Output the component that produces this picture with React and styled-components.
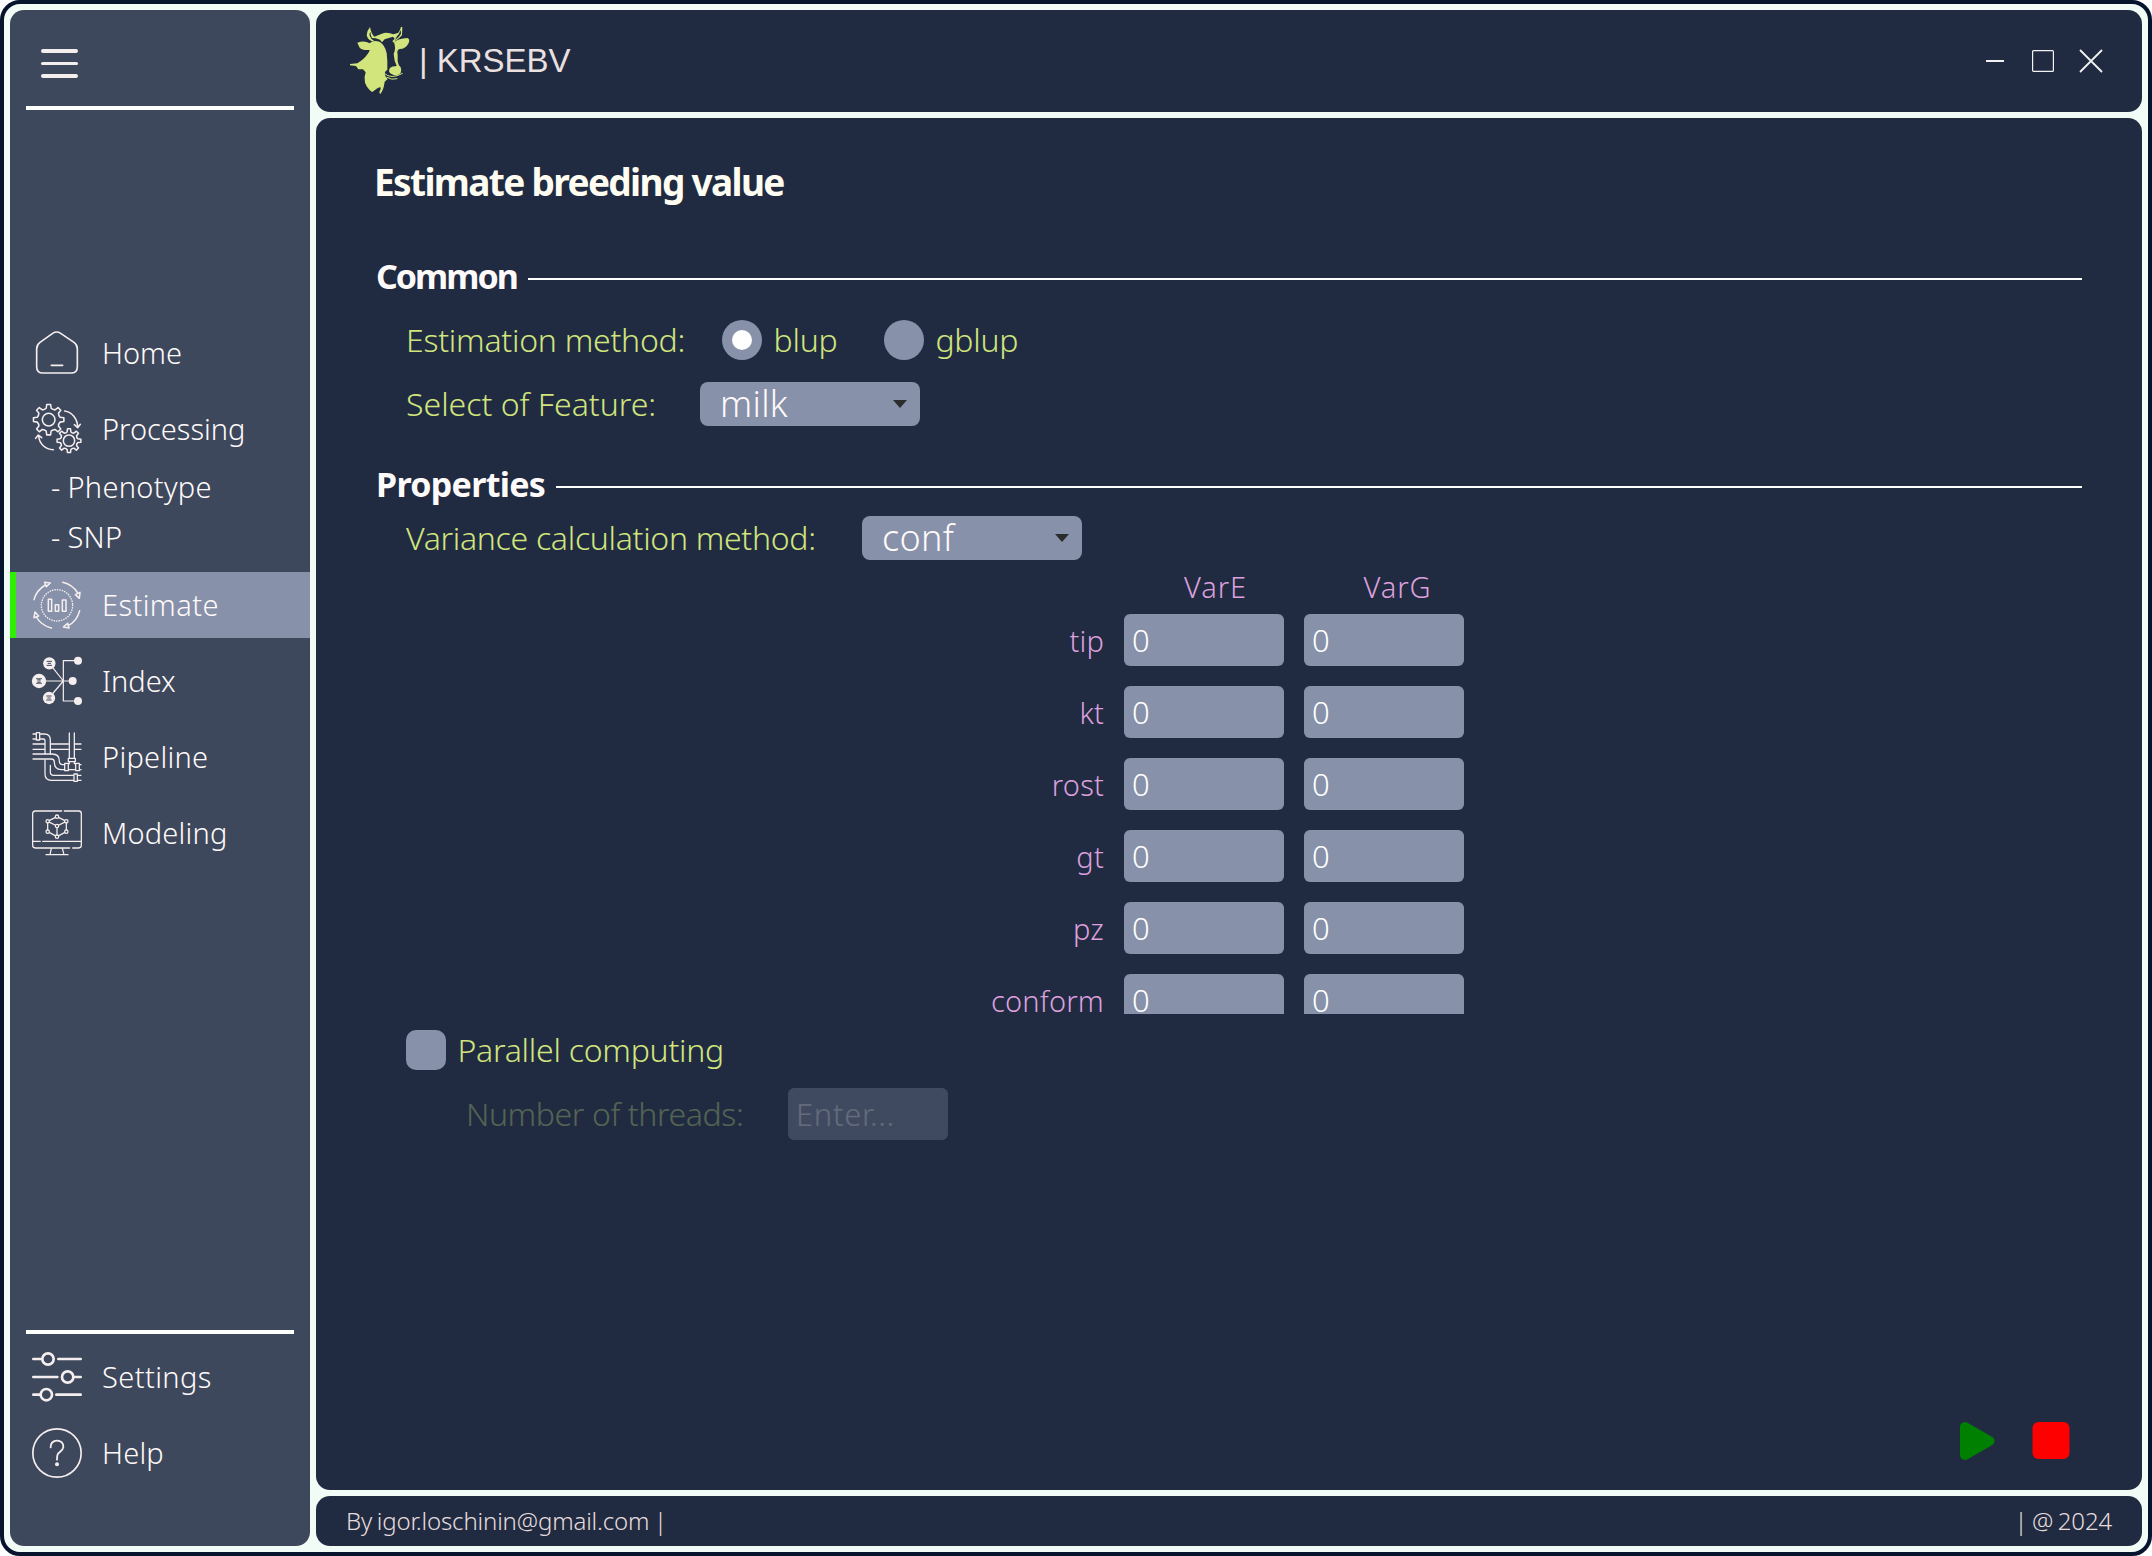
import React from "react";
import styled, { createGlobalStyle, css } from "styled-components";

const colors = {
  frame: "#07142e",
  gap: "#f2fcf7",
  sidebar: "#3e485c",
  panel: "#202b42",
  field: "#8791a9",
  icon: "#f5eeee",
  text: "#fffafa",
  lime: "#d1e57c",
  plum: "#dda0dd",
};

const GlobalStyle = createGlobalStyle`
  *, *::before, *::after { box-sizing: border-box; }
  body {
    margin: 0;
    background: #fff;
    font-family: "Noto Sans", "Open Sans", sans-serif;
    font-weight: 330;
  }
  button, input { font: inherit; }
`;

const Window = styled.div`
  display: grid;
  grid-template-columns: 300px minmax(0, 1fr);
  gap: 6px;
  width: 2152px;
  height: 1556px;
  padding: 6px;
  overflow: hidden;
  background: ${colors.gap};
  border: 4px solid ${colors.frame};
  border-radius: 20px;
`;

const panel = css`
  background: ${colors.panel};
  border-radius: 14px;
`;

const Sidebar = styled.aside`
  display: flex;
  flex-direction: column;
  padding-bottom: 60px;
  background: ${colors.sidebar};
  border-radius: 14px;
`;

const MenuToggle = styled.button`
  display: flex;
  flex-direction: column;
  gap: 9px;
  width: 37px;
  margin: 39px 0 28px 30.5px;
  padding: 0;
  border: 0;
  background: none;
`;

const ToggleBar = styled.span`
  height: 3.6px;
  border-radius: 2px;
  background: ${colors.icon};
`;

const Divider = styled.hr`
  width: 268px;
  height: 4px;
  margin: 0 16px;
  border: 0;
  background: #fff;
`;

const Nav = styled.nav`
  display: flex;
  flex-direction: column;
  gap: 10px;
  margin-top: ${(p) => p.$top};
`;

const NavItem = styled.a`
  display: flex;
  align-items: center;
  gap: 20px;
  height: 66px;
  padding: 0 16px;
  border-left: 6px solid ${(p) => (p.$active ? "#2df000" : "transparent")};
  background: ${(p) => (p.$active ? colors.field : "transparent")};
  background-clip: padding-box;
  color: ${colors.text};
  font-size: 29px;
  letter-spacing: ${(p) => p.$spacing || "0"};
  line-height: 40px;
`;

const NavGroup = styled.div`
  display: flex;
  flex-direction: column;
`;

const SubList = styled.div`
  display: flex;
  flex-direction: column;
  padding-left: 41px;
`;

const SubItem = styled.a`
  height: 50px;
  color: ${colors.text};
  font-size: 29px;
  letter-spacing: 0.3px;
  word-spacing: -1px;
  line-height: 49px;
`;

const Icon = styled.svg`
  flex: none;
  width: 50px;
  height: 50px;
  overflow: visible;
  fill: none;
  stroke: ${colors.icon};
  stroke-width: ${(p) => p.$stroke || 4.6};
  stroke-linecap: round;
  stroke-linejoin: round;
`;

const Content = styled.div`
  display: grid;
  grid-template-rows: 102px minmax(0, 1fr) 50px;
  gap: 6px;
`;

const TitleBar = styled.header`
  ${panel}
  display: flex;
  align-items: center;
  padding: 0 40px 0 29px;
`;

const CowLogo = styled.svg`
  width: 74px;
  height: 80px;
  margin-bottom: 2px;
  fill: #d2e47c;
`;

const AppName = styled.span`
  color: #ebe0e0;
  font: 400 33px/40px "Liberation Sans", Arial, sans-serif;
  margin-bottom: 1px;
`;

const WindowButtons = styled.div`
  display: flex;
  align-items: center;
  gap: 26px;
  margin-left: auto;
`;

const WindowIcon = styled.svg`
  width: 22px;
  height: 22px;
  overflow: visible;
  fill: none;
  stroke: #f2f2f2;
  stroke-width: ${(p) => p.$stroke || 2};
`;

const Page = styled.main`
  ${panel}
  display: flex;
  flex-direction: column;
  padding: 34px 60px 29px;
`;

const PageTitle = styled.h1`
  margin: 0 0 44px -2px;
  color: #fffdf2;
  font-size: 37px;
  font-weight: 700;
  letter-spacing: -1.65px;
  line-height: 60px;
`;

const SectionHead = styled.div`
  display: flex;
  align-items: center;
  gap: 11px;
  height: 40px;
  margin-top: ${(p) => p.$top || 0};

  &::after {
    content: "";
    flex: 1;
    height: 2px;
    margin-top: 6px;
    background: #fff;
  }
`;

const SectionTitle = styled.h2`
  margin: 0;
  color: ${colors.text};
  font-size: 34px;
  font-weight: 700;
  letter-spacing: ${(p) => p.$spacing};
  line-height: 40px;
`;

const FormRow = styled.div`
  display: flex;
  align-items: center;
  height: ${(p) => p.$height};
  margin-top: ${(p) => p.$top || 0};
  padding-left: ${(p) => p.$indent || "30px"};
  opacity: ${(p) => (p.$disabled ? 0.3 : 1)};
`;

const Label = styled.span`
  flex: none;
  width: ${(p) => p.$width || "auto"};
  color: ${colors.lime};
  font-size: 32px;
  letter-spacing: ${(p) => p.$spacing || 0};
  line-height: 40px;
  margin-bottom: 1px;
  white-space: nowrap;
`;

const RadioOption = styled.label`
  display: flex;
  align-items: center;
  gap: 11.5px;
  width: 162px;
`;

const RadioMark = styled.span`
  display: grid;
  place-items: center;
  width: 40px;
  height: 40px;
  border-radius: 50%;
  background: ${colors.field};

  &::after {
    content: "";
    width: 20px;
    height: 20px;
    border-radius: 50%;
    background: ${(p) => (p.$checked ? "#fff" : "transparent")};
  }
`;

const Select = styled.button`
  display: flex;
  align-items: center;
  justify-content: space-between;
  width: 220px;
  height: 44px;
  padding: 0 13px 0 20px;
  border: 0;
  border-radius: 8px;
  background: ${colors.field};
  color: ${colors.text};
  font-size: 36px;
  letter-spacing: 0.3px;
  line-height: 42px;
`;

const Caret = styled.span`
  border: 7.5px solid transparent;
  border-top: 8px solid #2b2c2e;
  border-bottom: 0;
`;

const TableViewport = styled.div`
  height: 454px;
  overflow: hidden;
`;

const VarianceGrid = styled.div`
  display: grid;
  grid-template-columns: 728px 160px 160px;
  grid-template-rows: 34px;
  grid-auto-rows: 52px;
  gap: 20px;
  align-items: center;
`;

const ColumnName = styled.span`
  padding: 20px 0 0 ${(p) => p.$shift};
  color: ${colors.plum};
  font-size: 29px;
  letter-spacing: 0.9px;
  line-height: 34px;
  text-align: center;
`;

const RowName = styled.span`
  padding-top: 2px;
  color: ${colors.plum};
  font-size: 29px;
  letter-spacing: 0.2px;
  line-height: 40px;
  text-align: right;
`;

const Field = styled.input`
  width: 160px;
  height: 52px;
  padding: 0 8px;
  border: 0;
  border-radius: 6px;
  outline: 0;
  background: ${colors.field};
  color: #fff;
  font-size: 31px;

  &::placeholder {
    color: #fff;
    opacity: 1;
    letter-spacing: 0.7px;
  }
`;

const CheckMark = styled.span`
  width: 40px;
  height: 40px;
  margin-right: 11.5px;
  border-radius: 10px;
  background: ${colors.field};
`;

const Actions = styled.div`
  display: flex;
  justify-content: flex-end;
  gap: 34px;
  margin-top: auto;
  padding-right: 11px;
`;

const ActionIcon = styled.svg`
  width: 40px;
  height: 40px;
  fill: ${(p) => p.$color};
  stroke: ${(p) => p.$color};
  stroke-linejoin: round;
`;

const StatusBar = styled.footer`
  ${panel}
  display: flex;
  align-items: center;
  justify-content: space-between;
  padding: 0 30px 2px 30px;
  color: #e6dcdc;
  font-size: 24px;
  letter-spacing: -0.15px;
  word-spacing: -1.5px;
`;

function gearPath(cx, cy, outer, inner, teeth) {
  const step = (Math.PI * 2) / teeth;
  const at = (r, a) => `${(cx + r * Math.cos(a)).toFixed(1)} ${(cy + r * Math.sin(a)).toFixed(1)}`;
  let d = "";
  for (let i = 0; i < teeth; i++) {
    const a = i * step - Math.PI / 2;
    d += `${i ? "L" : "M"}${at(inner, a - step * 0.27)}L${at(outer, a - step * 0.16)}L${at(outer, a + step * 0.16)}L${at(inner, a + step * 0.27)}`;
    d += `Q${at(inner - 3, a + step * 0.5)} ${at(inner, a + step * 0.73)}`;
  }
  return d + "Z";
}

const HomeIcon = () => (
  <Icon viewBox="0 0 150 150" $stroke={5}>
    <path d="M14 62Q14 50 24 43L62 16Q74 8 86 16L126 43Q136 50 136 62V116Q136 135 117 135H33Q14 135 14 116Z" />
    <path d="M58 112H92" />
  </Icon>
);

const ProcessingIcon = () => (
  <Icon viewBox="0 0 150 150">
    <path d={gearPath(50, 47, 46, 35, 8)} />
    <circle cx="50" cy="47" r="19" />
    <path d={gearPath(111, 110, 36, 27, 8)} />
    <circle cx="111" cy="110" r="17" />
    <path d="M98 21C120 24 136 44 137 68M127 62L137 71L145 61" />
    <path d="M64 137C40 136 22 120 20 96M11 103L19 93L29 101" />
  </Icon>
);

const EstimateIcon = () => (
  <Icon viewBox="0 0 150 150">
    <circle cx="75" cy="76" r="47" strokeDasharray="0.5 6.88" />
    <path d="M49 58H59V94H49ZM70 74H80V94H70ZM91 60H102V94H91Z" />
    <path d="M6 59Q14 30 40 15M38 7L55 9L43 20Z" />
    <path d="M92 7Q122 14 137 39M144 37L142 55L130 44Z" />
    <path d="M143 92Q135 124 108 137M111 144L94 141L107 130Z" />
    <path d="M58 144Q27 136 13 111M6 113L9 96L20 108Z" />
  </Icon>
);

const IndexIcon = () => (
  <Icon viewBox="0 0 150 150" $stroke={3.6}>
    <path d="M138 14H94V135H138M21 75H122M52 22L94 75L51 126" />
    <g fill={colors.icon} stroke="none">
      <circle cx="52" cy="22" r="18.5" />
      <circle cx="21" cy="75" r="21.5" />
      <circle cx="51" cy="126" r="18.5" />
      <circle cx="138" cy="14" r="12" />
      <circle cx="122" cy="75" r="12" />
      <circle cx="138" cy="135" r="12" />
    </g>
    <g stroke={colors.sidebar} strokeLinecap="butt" strokeWidth="3">
      <path d="M44 16H60M47 22H57M44 28H60" />
      <path d="M12 68H30M16 75H26M12 82H30M16 71H26M16 79H26" strokeWidth="2.6" />
      <path d="M43 120H59M46 126H56M43 132H59" />
    </g>
  </Icon>
);

const PipelineIcon = () => (
  <Icon viewBox="0 0 150 150" $stroke={3.8}>
    <path d="M3 6H13M3 21H13M13 2H23V24H13ZM23 6H37Q55 6 55 24V66M23 21H34Q39 21 39 27V66" />
    <path d="M3 36H38M3 52H38M56 36H109M56 52H109M128 36H147M128 52H147" />
    <path d="M3 66H60Q82 66 82 86Q82 98 92 98H98M3 81H58Q67 81 67 90Q67 113 88 113H98" />
    <path d="M98 94H109V116H98ZM131 94H142V116H131ZM109 113H131M142 98H147M142 113H147" />
    <path d="M112 3V79M127 3V79M109 79H130V89H109ZM112 89V95H109M127 89V95H131" />
    <path d="M39 84V126Q39 145 58 145H126M55 100V120Q55 130 65 130H126M126 126H136V148H126ZM136 130H147M136 145H147" />
  </Icon>
);

const ModelingIcon = () => (
  <Icon viewBox="0 0 150 150" $stroke={3.8}>
    <path d="M89 9H10Q2 9 2 17V112Q2 120 10 120H113M97 9H140Q148 9 148 17V112Q148 120 140 120H122" />
    <path d="M2 100H25M32 100H148M58 121L54 140M91 121L96 140M42 140H108" />
    <path d="M75 26L103 40V71L75 86L47 71V40ZM47 40L75 54L103 40M75 54V86" />
    <g fill={colors.sidebar}>
      <circle cx="75" cy="26" r="5" />
      <circle cx="103" cy="40" r="5" />
      <circle cx="103" cy="71" r="5" />
      <circle cx="75" cy="86" r="5" />
      <circle cx="47" cy="71" r="5" />
      <circle cx="47" cy="40" r="5" />
      <circle cx="75" cy="54" r="5" />
    </g>
  </Icon>
);

const SettingsIcon = () => (
  <Icon viewBox="0 0 150 150" $stroke={8}>
    <path d="M4 21H28M79 21H146M4 75H76M127 75H146M4 128H23M73 128H146" />
    <circle cx="48" cy="21" r="17" />
    <circle cx="107" cy="75" r="17" />
    <circle cx="43" cy="128" r="17" />
  </Icon>
);

const HelpIcon = () => (
  <Icon viewBox="0 0 150 150" $stroke={5}>
    <circle cx="75" cy="75" r="72.5" />
    <path d="M56 58C55 46 63 38 75 38C87 38 95 46 94 57C93 68 82 71 77 79Q75 83 75 95" strokeWidth="5.5" />
    <circle cx="75" cy="109" r="6" fill={colors.icon} stroke="none" />
  </Icon>
);

const Cow = () => (
  <CowLogo viewBox="0 0 222 240">
    <path d="M75 21Q65 33 65 46Q68 59 81 64L88 63Q77 56 74 47Q72 41 77 35L77 44L81 54L92 55L105 59L111 67L119 58L144 50L149 56L142 64L147 68L151 62L160 56L171 46L172 22L168 20Q164 37 156 40L145 43Q132 37 117 39Q103 44 88 50Q79 42 75 21ZM167 30L168 41Q162 52 150 60L155 50Q163 42 167 30Z" fillRule="evenodd" />
    <path d="M37 68Q58 60 74 70Q85 58 105 66Q120 76 125 99Q128 122 127 149Q116 155 121 168L128 177L119 185Q116 211 105 223L103 216Q109 208 107 202Q98 202 94 207L82 216Q68 208 60 188Q56 172 62 157L54 148H40L33 138L15 136V132L37 130Q57 118 65 106Q74 94 74 90Q52 92 44 83Z" />
    <path d="M147 67Q160 55 187 54Q196 57 191 69Q182 87 164 87Q154 90 158 104L158 124Q160 137 167 142Q174 162 154 166Q136 165 132 154Q132 139 151 139L155 137L149 122L146 101Q154 87 147 67Z" />
    <path d="M118 160Q137 179 173 160M126 172Q139 181 157 176" fill="none" stroke="#d2e47c" strokeWidth="3" />
  </CowLogo>
);

const subPages = ["Phenotype", "SNP"];

const analysisPages = [
  { label: "Estimate", icon: EstimateIcon, active: true, spacing: "0.4px" },
  { label: "Index", icon: IndexIcon },
  { label: "Pipeline", icon: PipelineIcon, spacing: "0.3px" },
  { label: "Modeling", icon: ModelingIcon, spacing: "0.2px" },
];

const traits = ["tip", "kt", "rost", "gt", "pz", "conform"];

const NavEntry = ({ icon: Glyph, label, active, spacing }) => (
  <NavItem $active={active} $spacing={spacing}>
    <Glyph />
    {label}
  </NavItem>
);

export default function App() {
  return (
    <>
      <GlobalStyle />
      <Window>
        <Sidebar>
          <MenuToggle aria-label="Menu">
            <ToggleBar />
            <ToggleBar />
            <ToggleBar />
          </MenuToggle>
          <Divider />
          <Nav $top="210px">
            <NavEntry icon={HomeIcon} label="Home" />
            <NavGroup>
              <NavEntry icon={ProcessingIcon} label="Processing" />
              <SubList>
                {subPages.map((name) => (
                  <SubItem key={name}>- {name}</SubItem>
                ))}
              </SubList>
            </NavGroup>
            {analysisPages.map((item) => (
              <NavEntry key={item.label} {...item} />
            ))}
          </Nav>
          <Nav $top="auto">
            <Divider />
            <NavEntry icon={SettingsIcon} label="Settings" spacing="0.4px" />
            <NavEntry icon={HelpIcon} label="Help" spacing="0.2px" />
          </Nav>
        </Sidebar>

        <Content>
          <TitleBar>
            <Cow />
            <AppName>| KRSEBV</AppName>
            <WindowButtons>
              <WindowIcon viewBox="0 0 22 22">
                <path d="M2 11H20" />
              </WindowIcon>
              <WindowIcon viewBox="0 0 22 22" $stroke={1.2}>
                <rect x="0.6" y="0.6" width="20.8" height="20.8" rx="1" />
              </WindowIcon>
              <WindowIcon viewBox="0 0 22 22" $stroke={1.8}>
                <path d="M0 0L22 22M22 0L0 22" />
              </WindowIcon>
            </WindowButtons>
          </TitleBar>

          <Page>
            <PageTitle>Estimate breeding value</PageTitle>

            <SectionHead>
              <SectionTitle $spacing="-2px">Common</SectionTitle>
            </SectionHead>
            <FormRow $height="40px" $top="24px">
              <Label $width="316px" $spacing="-0.25px">Estimation method:</Label>
              <RadioOption>
                <RadioMark $checked />
                <Label $spacing="-0.2px">blup</Label>
              </RadioOption>
              <RadioOption>
                <RadioMark />
                <Label $spacing="-0.3px">gblup</Label>
              </RadioOption>
            </FormRow>
            <FormRow $height="44px" $top="22px">
              <Label $width="294px">Select of Feature:</Label>
              <Select>
                milk
                <Caret />
              </Select>
            </FormRow>

            <SectionHead $top="38px">
              <SectionTitle $spacing="-0.7px">Properties</SectionTitle>
            </SectionHead>
            <FormRow $height="44px" $top="12px">
              <Label $width="456px" $spacing="-0.3px">Variance calculation method:</Label>
              <Select>
                conf
                <Caret />
              </Select>
            </FormRow>
            <TableViewport>
              <VarianceGrid>
                <span />
                <ColumnName $shift="23px">VarE</ColumnName>
                <ColumnName $shift="27px">VarG</ColumnName>
                {traits.map((trait) => (
                  <React.Fragment key={trait}>
                    <RowName>{trait}</RowName>
                    <Field defaultValue="0" />
                    <Field defaultValue="0" />
                  </React.Fragment>
                ))}
              </VarianceGrid>
            </TableViewport>
            <FormRow $height="40px" $top="16px">
              <CheckMark />
              <Label $spacing="-0.25px">Parallel computing</Label>
            </FormRow>
            <FormRow $height="52px" $top="18px" $indent="90px" $disabled>
              <Label $width="322px" $spacing="-0.4px">Number of threads:</Label>
              <Field placeholder="Enter..." disabled />
            </FormRow>

            <Actions>
              <ActionIcon viewBox="0 0 40 40" $color="#008000">
                <path d="M8 6V34L32.5 20Z" strokeWidth="10" />
              </ActionIcon>
              <ActionIcon viewBox="0 0 40 40" $color="#ff0000">
                <rect x="1.5" y="1" width="37" height="37" rx="6" strokeWidth="0" />
              </ActionIcon>
            </Actions>
          </Page>

          <StatusBar>
            <span>By igor.loschinin@gmail.com |</span>
            <span>| @ 2024</span>
          </StatusBar>
        </Content>
      </Window>
    </>
  );
}
